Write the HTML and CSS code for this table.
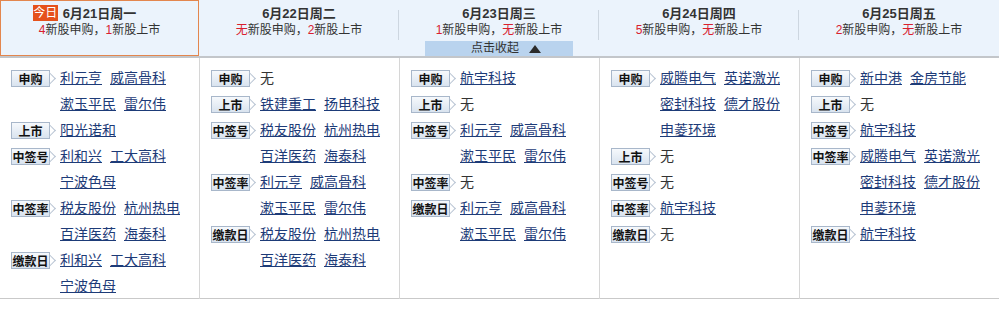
FILE: index.html
```html
<!DOCTYPE html>
<html lang="zh-CN">
<head>
<meta charset="utf-8">
<title>新股日历</title>
<link rel="stylesheet" href="styles.css">
</head>
<body>
<div class="ipo">
  <div class="head">
    <div class="day today">
      <div class="date"><span class="badge">今日</span>6月21日周一</div>
      <div class="sum"><em>4</em>新股申购，<em>1</em>新股上市</div>
    </div>
    <div class="day">
      <div class="date">6月22日周二</div>
      <div class="sum"><em>无</em>新股申购，<em>2</em>新股上市</div>
    </div>
    <div class="day sep">
      <div class="date">6月23日周三</div>
      <div class="sum"><em>1</em>新股申购，<em>无</em>新股上市</div>
      <div class="fold">点击收起<i class="tri"></i></div>
    </div>
    <div class="day sep">
      <div class="date">6月24日周四</div>
      <div class="sum"><em>5</em>新股申购，<em>无</em>新股上市</div>
    </div>
    <div class="day sep">
      <div class="date">6月25日周五</div>
      <div class="sum"><em>2</em>新股申购，<em>无</em>新股上市</div>
    </div>
  </div>
  <div class="body">
    <div class="col">
      <div class="grp"><span class="tag">申购</span><div class="links"><a href="#">利元亨</a><a href="#">威高骨科</a><a href="#">漱玉平民</a><a href="#">雷尔伟</a></div></div>
      <div class="grp"><span class="tag">上市</span><div class="links"><a href="#">阳光诺和</a></div></div>
      <div class="grp"><span class="tag">中签号</span><div class="links"><a href="#">利和兴</a><a href="#">工大高科</a><a href="#">宁波色母</a></div></div>
      <div class="grp"><span class="tag">中签率</span><div class="links"><a href="#">税友股份</a><a href="#">杭州热电</a><a href="#">百洋医药</a><a href="#">海泰科</a></div></div>
      <div class="grp"><span class="tag">缴款日</span><div class="links"><a href="#">利和兴</a><a href="#">工大高科</a><a href="#">宁波色母</a></div></div>
    </div>
    <div class="col">
      <div class="grp"><span class="tag">申购</span><div class="links"><span class="none">无</span></div></div>
      <div class="grp"><span class="tag">上市</span><div class="links"><a href="#">铁建重工</a><a href="#">扬电科技</a></div></div>
      <div class="grp"><span class="tag">中签号</span><div class="links"><a href="#">税友股份</a><a href="#">杭州热电</a><a href="#">百洋医药</a><a href="#">海泰科</a></div></div>
      <div class="grp"><span class="tag">中签率</span><div class="links"><a href="#">利元亨</a><a href="#">威高骨科</a><a href="#">漱玉平民</a><a href="#">雷尔伟</a></div></div>
      <div class="grp"><span class="tag">缴款日</span><div class="links"><a href="#">税友股份</a><a href="#">杭州热电</a><a href="#">百洋医药</a><a href="#">海泰科</a></div></div>
    </div>
    <div class="col">
      <div class="grp"><span class="tag">申购</span><div class="links"><a href="#">航宇科技</a></div></div>
      <div class="grp"><span class="tag">上市</span><div class="links"><span class="none">无</span></div></div>
      <div class="grp"><span class="tag">中签号</span><div class="links"><a href="#">利元亨</a><a href="#">威高骨科</a><a href="#">漱玉平民</a><a href="#">雷尔伟</a></div></div>
      <div class="grp"><span class="tag">中签率</span><div class="links"><span class="none">无</span></div></div>
      <div class="grp"><span class="tag">缴款日</span><div class="links"><a href="#">利元亨</a><a href="#">威高骨科</a><a href="#">漱玉平民</a><a href="#">雷尔伟</a></div></div>
    </div>
    <div class="col">
      <div class="grp"><span class="tag">申购</span><div class="links"><a href="#">威腾电气</a><a href="#">英诺激光</a><a href="#">密封科技</a><a href="#">德才股份</a><a href="#">申菱环境</a></div></div>
      <div class="grp"><span class="tag">上市</span><div class="links"><span class="none">无</span></div></div>
      <div class="grp"><span class="tag">中签号</span><div class="links"><span class="none">无</span></div></div>
      <div class="grp"><span class="tag">中签率</span><div class="links"><a href="#">航宇科技</a></div></div>
      <div class="grp"><span class="tag">缴款日</span><div class="links"><span class="none">无</span></div></div>
    </div>
    <div class="col last">
      <div class="grp"><span class="tag">申购</span><div class="links"><a href="#">新中港</a><a href="#">金房节能</a></div></div>
      <div class="grp"><span class="tag">上市</span><div class="links"><span class="none">无</span></div></div>
      <div class="grp"><span class="tag">中签号</span><div class="links"><a href="#">航宇科技</a></div></div>
      <div class="grp"><span class="tag">中签率</span><div class="links"><a href="#">威腾电气</a><a href="#">英诺激光</a><a href="#">密封科技</a><a href="#">德才股份</a><a href="#">申菱环境</a></div></div>
      <div class="grp"><span class="tag">缴款日</span><div class="links"><a href="#">航宇科技</a></div></div>
    </div>
  </div>
</div>
</body>
</html>
```

FILE: styles.css
```css
* { box-sizing: border-box; }
html, body { margin: 0; padding: 0; background: #fff; }
body {
  font-family: "Liberation Sans", "Noto Sans CJK SC", sans-serif;
  color: #333;
  width: 999px;
  height: 311px;
  overflow: hidden;
}
.ipo { width: 999px; }

.head {
  display: grid;
  grid-template-columns: 199px 200px 200px 200px 200px;
  height: 58px;
  background: #ebf3fc;
  border-bottom: 2px solid #c3c6ca;
}
.day {
  position: relative;
  display: flex;
  flex-direction: column;
  align-items: center;
  padding-top: 6px;
  height: 56px;
}
.day.today {
  border: 1px solid #e3864e;
  padding-top: 5px;
}
.day.sep::before {
  content: "";
  position: absolute;
  left: -1px;
  top: 10px;
  height: 30px;
  border-left: 1px solid #cdd6e0;
}
.date {
  position: relative;
  font-size: 13px;
  font-weight: bold;
  line-height: 16px;
  color: #333;
}
.badge {
  position: absolute;
  right: 100%;
  margin-right: 5px;
  top: -1px;
  width: 25px;
  height: 16px;
  background: #e5511c;
  color: #fff;
  font-size: 12px;
  font-weight: normal;
  line-height: 16px;
  text-align: center;
}
.sum {
  font-size: 12px;
  line-height: 16px;
  color: #333;
}
.sum em {
  font-style: normal;
  color: #d9202e;
}
.fold {
  margin-top: 3px;
  width: 148px;
  height: 15px;
  background: #b9d3ee;
  font-size: 12px;
  line-height: 15px;
  color: #333;
  display: flex;
  justify-content: center;
  align-items: center;
  gap: 10px;
  padding-left: 14px;
}
.tri {
  width: 0;
  height: 0;
  border-left: 6.5px solid transparent;
  border-right: 6.5px solid transparent;
  border-bottom: 8px solid #2b2b2b;
}

.body {
  display: grid;
  grid-template-columns: 200px 200px 200px 200px 199px;
  height: 241px;
  border-bottom: 1px solid #c9c9c9;
}
.col {
  border-right: 1px solid #d6d6d6;
  padding: 7px 0 0 11px;
}
.col.last { border-right: 0; }
.grp {
  display: flex;
  align-items: flex-start;
}
.tag {
  position: relative;
  flex: none;
  margin-top: 5px;
  width: 39px;
  height: 17px;
  border: 1px solid #a8b7ca;
  background: linear-gradient(#f6f9fc, #d9e3ef);
  font-family: "Noto Sans CJK SC", sans-serif;
  font-size: 12px;
  font-weight: bold;
  line-height: 15px;
  color: #111;
  text-align: center;
  margin-right: 10px;
}
.tag::after {
  content: "";
  position: absolute;
  right: -5px;
  top: 3px;
  width: 8px;
  height: 8px;
  border-top: 1px solid #b7c3d2;
  border-right: 1px solid #b7c3d2;
  transform: rotate(45deg);
}
.links {
  width: 132px;
  display: flex;
  flex-wrap: wrap;
  column-gap: 8px;
  font-size: 14px;
  line-height: 26px;
}
.links a {
  color: #1d3b78;
  text-decoration: underline;
  white-space: nowrap;
}
.none { color: #333; }
```
